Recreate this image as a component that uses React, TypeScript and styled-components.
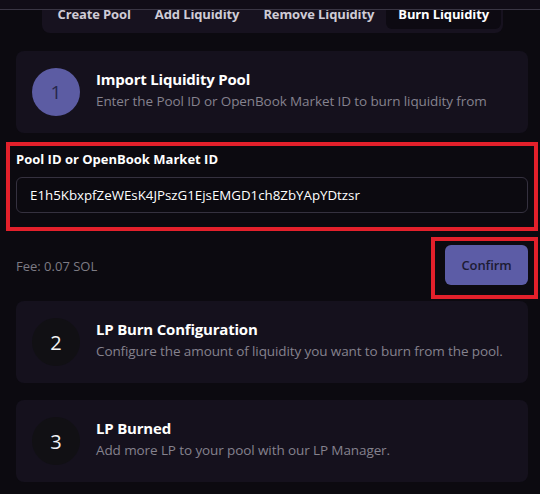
import React from "react";
import styled, { createGlobalStyle } from "styled-components";

const GlobalStyle = createGlobalStyle`
  html, body {
    margin: 0;
    padding: 0;
    background: #0c0a10;
  }
  body {
    font-family: "Open Sans", "Noto Sans", "Liberation Sans", sans-serif;
    color: #ffffff;
    overflow: hidden;
  }
  * { box-sizing: border-box; }
`;

const Page = styled.div`
  position: relative;
  width: 540px;
  height: 494px;
  padding: 0 12px 0 16px;
  background: #0c0a10;
  overflow: hidden;
`;

const HeaderEdge = styled.div`
  position: absolute;
  top: 0;
  left: 0;
  right: 0;
  height: 10px;
  background: #110d17;
  border-bottom: 1px solid #3a3644;
  z-index: 2;
`;

const TabBar = styled.div`
  display: flex;
  width: 461px;
  margin: -5px auto 0;
  padding: 4px;
  background: #17121f;
  border-radius: 8px;
`;

const Tab = styled.div<{ $active?: boolean }>`
  display: flex;
  align-items: center;
  height: 30px;
  padding: 0 12px;
  border-radius: 6px;
  font-size: 13px;
  font-weight: 700;
  letter-spacing: -0.12px;
  white-space: nowrap;
  color: ${(p) => (p.$active ? "#ffffff" : "#cfccd6")};
  background: ${(p) => (p.$active ? "#0d0a12" : "transparent")};
`;

const Card = styled.div<{ $mt: number }>`
  display: flex;
  align-items: center;
  gap: 16px;
  height: 82px;
  margin-top: ${(p) => p.$mt}px;
  padding: 0 16px;
  background: #15111d;
  border-radius: 8px;
`;

const StepCircle = styled.div<{ $active?: boolean }>`
  flex: 0 0 48px;
  width: 48px;
  height: 48px;
  border-radius: 50%;
  display: flex;
  align-items: center;
  justify-content: center;
  font-size: ${(p) => (p.$active ? "19px" : "20px")};
  font-weight: 400;
  background: ${(p) => (p.$active ? "#5c5ca3" : "#111014")};
  color: ${(p) => (p.$active ? "#26264a" : "#f2f2f4")};
`;

const StepText = styled.div`
  display: flex;
  flex-direction: column;
  gap: 2px;
  margin-top: -4px;
`;

const StepTitle = styled.div`
  font-size: 15px;
  font-weight: 700;
  line-height: 20px;
  letter-spacing: -0.2px;
  color: #ffffff;
`;

const StepDesc = styled.div`
  font-size: 13.5px;
  line-height: 20px;
  letter-spacing: -0.1px;
  color: #85828e;
  white-space: nowrap;
`;

const Field = styled.div`
  position: relative;
  display: flex;
  flex-direction: column;
  margin-top: 17px;
  &::after {
    content: "";
    position: absolute;
    top: -8px;
    left: -10px;
    right: -10px;
    bottom: -18px;
    border: 4px solid #e3202b;
    pointer-events: none;
  }
`;

const Label = styled.div`
  font-size: 13px;
  font-weight: 700;
  line-height: 18px;
  letter-spacing: 0;
  color: #ffffff;
`;

const Input = styled.div`
  margin-top: 9px;
  height: 36px;
  display: flex;
  align-items: center;
  padding: 0 13px;
  background: #0c0a10;
  border: 1px solid #35313f;
  border-radius: 6px;
  font-size: 13.3px;
  letter-spacing: 0;
  color: #ffffff;
`;

const ActionRow = styled.div`
  display: flex;
  align-items: center;
  justify-content: space-between;
  margin-top: 32px;
`;

const Fee = styled.div`
  font-size: 13px;
  letter-spacing: 0;
  color: #7d7b84;
  margin-top: 2px;
`;

const ConfirmWrap = styled.div`
  position: relative;
  &::after {
    content: "";
    position: absolute;
    top: -8px;
    left: -14px;
    right: -10px;
    bottom: -14px;
    border: 4px solid #e3202b;
    pointer-events: none;
  }
`;

const ConfirmButton = styled.button`
  width: 83px;
  height: 40px;
  border: none;
  border-radius: 6px;
  background: #5c5ca6;
  color: #1d1b33;
  font-family: inherit;
  font-size: 13px;
  font-weight: 600;
  letter-spacing: -0.1px;
  padding: 0;
`;

const steps = [
  {
    n: "2",
    title: "LP Burn Configuration",
    desc: "Configure the amount of liquidity you want to burn from the pool.",
    mt: 16,
  },
  {
    n: "3",
    title: "LP Burned",
    desc: "Add more LP to your pool with our LP Manager.",
    mt: 17,
  },
];

export default function App() {
  return (
    <>
      <GlobalStyle />
      <Page>
        <HeaderEdge />
        <TabBar>
          <Tab>Create Pool</Tab>
          <Tab>Add Liquidity</Tab>
          <Tab>Remove Liquidity</Tab>
          <Tab $active>Burn Liquidity</Tab>
        </TabBar>

        <Card $mt={18}>
          <StepCircle $active>1</StepCircle>
          <StepText>
            <StepTitle>Import Liquidity Pool</StepTitle>
            <StepDesc>Enter the Pool ID or OpenBook Market ID to burn liquidity from</StepDesc>
          </StepText>
        </Card>

        <Field>
          <Label>Pool ID or OpenBook Market ID</Label>
          <Input>E1h5KbxpfZeWEsK4JPszG1EjsEMGD1ch8ZbYApYDtzsr</Input>
        </Field>

        <ActionRow>
          <Fee>Fee: 0.07 SOL</Fee>
          <ConfirmWrap>
            <ConfirmButton>Confirm</ConfirmButton>
          </ConfirmWrap>
        </ActionRow>

        {steps.map((s) => (
          <Card key={s.n} $mt={s.mt}>
            <StepCircle>{s.n}</StepCircle>
            <StepText>
              <StepTitle>{s.title}</StepTitle>
              <StepDesc>{s.desc}</StepDesc>
            </StepText>
          </Card>
        ))}
      </Page>
    </>
  );
}
